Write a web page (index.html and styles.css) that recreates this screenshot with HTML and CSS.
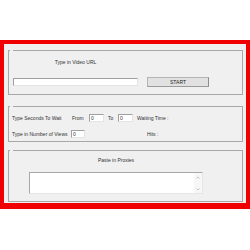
FILE: index.html
```html
<!DOCTYPE html>
<html>
<head>
<meta charset="utf-8">
<link rel="stylesheet" href="styles.css">
</head>
<body>
<div class="frame">
  <fieldset class="group g1">
    <legend class="cap"></legend>
    <div class="urlrow">
      <div class="urlcol">
        <div class="label center">Type in Video URL</div>
        <div class="field url"></div>
      </div>
      <div class="button">START</div>
    </div>
  </fieldset>
  <fieldset class="group g2">
    <legend class="cap"></legend>
    <div class="rows">
      <div class="row">
        <span class="label w-wait">Type Seconds To Wait</span>
        <span class="label w-from">From</span>
        <span class="field small">0</span>
        <span class="label w-to">To</span>
        <span class="field small">0</span>
        <span class="label ml4">Waiting Time :</span>
      </div>
      <div class="row r2">
        <span class="label w-views">Type in Number of Views</span>
        <span class="field small2">0</span>
        <span class="label hits">Hits :</span>
      </div>
    </div>
  </fieldset>
  <fieldset class="group g3">
    <legend class="cap"></legend>
    <div class="proxcol">
      <div class="label center">Paste in Proxies</div>
      <div class="textarea">
        <div class="text"></div>
        <div class="scroll">
          <svg width="4" height="3" viewBox="0 0 4 3"><path d="M0.5 2.5 L2 1 L3.5 2.5" fill="none" stroke="#b8b8b8" stroke-width="0.8"/></svg>
          <svg width="4" height="3" viewBox="0 0 4 3"><path d="M0.5 0.5 L2 2 L3.5 0.5" fill="none" stroke="#b8b8b8" stroke-width="0.8"/></svg>
        </div>
      </div>
    </div>
  </fieldset>
</div>
</body>
</html>
```
FILE: styles.css
```css
html, body {
  margin: 0;
  padding: 0;
  background: #ffffff;
}
body {
  width: 250px;
  height: 250px;
  font-family: "Liberation Sans", Arial, sans-serif;
  font-size: 5px;
  color: #333333;
}
.frame {
  box-sizing: border-box;
  margin-top: 40px;
  width: 250px;
  height: 169px;
  border: 4px solid #f00000;
  border-bottom-width: 6px;
  background: #f0f0f0;
  padding: 6px 3px 0 4px;
  display: flex;
  flex-direction: column;
}
.group {
  margin: 0;
  padding: 0;
  border: 1px solid #a8a8a8;
  min-inline-size: 0;
  box-sizing: border-box;
}
.cap {
  padding: 0;
  margin-left: 1px;
  width: 3px;
  height: 0;
  font-size: 0;
  line-height: 0;
}
.label {
  line-height: 6px;
  white-space: nowrap;
}
.center {
  text-align: center;
}
.g1 {
  height: 45px;
  padding-top: 8px;
}
.urlrow {
  display: flex;
  align-items: flex-end;
  margin-left: 4px;
}
.urlcol {
  width: 125px;
  display: flex;
  flex-direction: column;
}
.urlcol .label {
  margin-bottom: 13px;
}
.field {
  box-sizing: border-box;
  background: #ffffff;
  border: 1px solid #e4e4e4;
  border-top-color: #a0a0a0;
  border-left-color: #a0a0a0;
  height: 8px;
  line-height: 6px;
  padding-left: 1px;
  display: inline-block;
}
.url {
  width: 125px;
}
.button {
  box-sizing: border-box;
  margin-left: 9px;
  margin-bottom: -1px;
  width: 62px;
  height: 10px;
  background: #e1e1e1;
  border: 1px solid #b4b4b4;
  border-right-color: #8c8c8c;
  border-bottom-color: #9a9a9a;
  text-align: center;
  line-height: 8px;
  color: #222;
}
.g2 {
  margin-top: 11px;
  height: 36px;
  padding-top: 7px;
}
.rows {
  margin-left: 3px;
}
.row {
  display: flex;
  align-items: center;
  height: 8px;
}
.r2 {
  margin-top: 8px;
}
.w-wait { width: 60px; }
.w-from { width: 17px; }
.w-to { width: 10px; margin-left: 4px; }
.ml4 { margin-left: 4px; }
.small { width: 15px; }
.w-views { width: 59px; }
.small2 { width: 14px; }
.hits { margin-left: 62px; }
.g3 {
  margin-top: 8px;
  height: 52px;
  padding-top: 6px;
}
.proxcol {
  margin-left: 20px;
  width: 174px;
  display: flex;
  flex-direction: column;
}
.proxcol .label {
  margin-bottom: 9px;
}
.textarea {
  box-sizing: border-box;
  height: 22px;
  background: #ffffff;
  border: 1px solid #e6e6e6;
  border-top-color: #a8a8a8;
  border-left-color: #a8a8a8;
  display: flex;
}
.text {
  flex: 1;
}
.scroll {
  width: 8px;
  background: #f7f7f7;
  display: flex;
  flex-direction: column;
  align-items: center;
  justify-content: space-between;
  padding: 3px 0 2px;
}
.scroll svg {
  display: block;
}
```
